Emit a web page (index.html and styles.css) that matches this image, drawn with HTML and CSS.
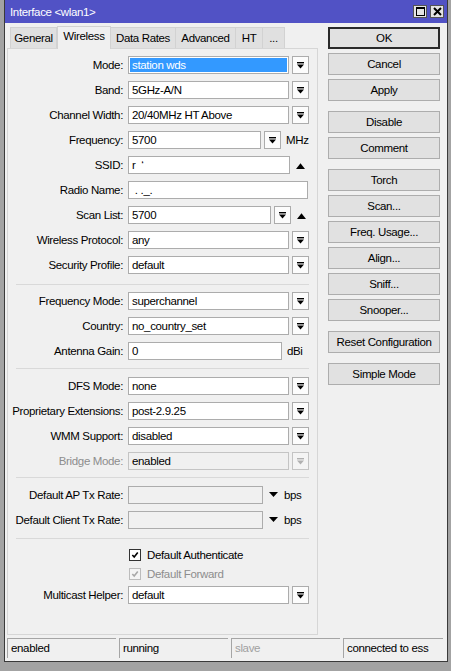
FILE: index.html
```html
<!DOCTYPE html>
<html lang="en">
<head>
    <meta charset="UTF-8">
    <title>Interface &lt;wlan1&gt;</title>
    <link rel="stylesheet" href="styles.css">
</head>
<body>
    <div class="window">
        <div class="titlebar">
            <span class="title">Interface &lt;wlan1&gt;</span>
            <div class="title-btns">
                <span class="tbtn"><svg width="9" height="9" viewBox="0 0 9 9"><rect x="0.5" y="0.5" width="8" height="8" fill="none" stroke="#000"/><rect x="0.5" y="0.5" width="8" height="1.5" fill="#000"/></svg></span>
                <span class="tbtn"><svg width="9" height="9" viewBox="0 0 9 9"><path d="M1 1L8 8M8 1L1 8" stroke="#000" stroke-width="2"/></svg></span>
            </div>
        </div>

        <div class="main">
            <div class="left">
                <div class="tabs">
                    <span class="tab t-general">General</span>
                    <span class="tab active t-wireless">Wireless</span>
                    <span class="tab t-rates">Data Rates</span>
                    <span class="tab t-adv">Advanced</span>
                    <span class="tab t-ht">HT</span>
                    <span class="tab t-more">...</span>
                </div>

                <div class="panel">
                    <div class="section s1">
                        <div class="row">
                            <span class="lbl">Mode:</span>
                            <span class="field w-std selected">station wds</span>
                            <span class="dd"><svg viewBox="0 0 7 7"><rect width="7" height="1.4"/><path d="M0 2.6H7L3.5 6.6Z"/></svg></span>
                        </div>
                        <div class="row">
                            <span class="lbl">Band:</span>
                            <span class="field w-std">5GHz-A/N</span>
                            <span class="dd"><svg viewBox="0 0 7 7"><rect width="7" height="1.4"/><path d="M0 2.6H7L3.5 6.6Z"/></svg></span>
                        </div>
                        <div class="row">
                            <span class="lbl">Channel Width:</span>
                            <span class="field w-std">20/40MHz HT Above</span>
                            <span class="dd"><svg viewBox="0 0 7 7"><rect width="7" height="1.4"/><path d="M0 2.6H7L3.5 6.6Z"/></svg></span>
                        </div>
                        <div class="row">
                            <span class="lbl">Frequency:</span>
                            <span class="field w-freq">5700</span>
                            <span class="dd"><svg viewBox="0 0 7 7"><rect width="7" height="1.4"/><path d="M0 2.6H7L3.5 6.6Z"/></svg></span>
                            <span class="unit">MHz</span>
                        </div>
                        <div class="row">
                            <span class="lbl">SSID:</span>
                            <span class="field w-ssid">r&nbsp;&nbsp;&#8216;</span>
                            <span class="up"><svg viewBox="0 0 8 6"><path d="M0 6H8L4 1Z"/></svg></span>
                        </div>
                        <div class="row">
                            <span class="lbl">Radio Name:</span>
                            <span class="field w-radio">&nbsp;. ._.</span>
                        </div>
                        <div class="row">
                            <span class="lbl">Scan List:</span>
                            <span class="field w-scan">5700</span>
                            <span class="dd"><svg viewBox="0 0 7 7"><rect width="7" height="1.4"/><path d="M0 2.6H7L3.5 6.6Z"/></svg></span>
                            <span class="up"><svg viewBox="0 0 8 6"><path d="M0 6H8L4 1Z"/></svg></span>
                        </div>
                        <div class="row">
                            <span class="lbl">Wireless Protocol:</span>
                            <span class="field w-std">any</span>
                            <span class="dd"><svg viewBox="0 0 7 7"><rect width="7" height="1.4"/><path d="M0 2.6H7L3.5 6.6Z"/></svg></span>
                        </div>
                        <div class="row">
                            <span class="lbl">Security Profile:</span>
                            <span class="field w-std">default</span>
                            <span class="dd"><svg viewBox="0 0 7 7"><rect width="7" height="1.4"/><path d="M0 2.6H7L3.5 6.6Z"/></svg></span>
                        </div>
                    </div>

                    <div class="section s2">
                        <div class="row">
                            <span class="lbl">Frequency Mode:</span>
                            <span class="field w-std">superchannel</span>
                            <span class="dd"><svg viewBox="0 0 7 7"><rect width="7" height="1.4"/><path d="M0 2.6H7L3.5 6.6Z"/></svg></span>
                        </div>
                        <div class="row">
                            <span class="lbl">Country:</span>
                            <span class="field w-std">no_country_set</span>
                            <span class="dd"><svg viewBox="0 0 7 7"><rect width="7" height="1.4"/><path d="M0 2.6H7L3.5 6.6Z"/></svg></span>
                        </div>
                        <div class="row">
                            <span class="lbl">Antenna Gain:</span>
                            <span class="field w-gain">0</span>
                            <span class="unit">dBi</span>
                        </div>
                    </div>

                    <div class="section s3">
                        <div class="row">
                            <span class="lbl">DFS Mode:</span>
                            <span class="field w-std">none</span>
                            <span class="dd"><svg viewBox="0 0 7 7"><rect width="7" height="1.4"/><path d="M0 2.6H7L3.5 6.6Z"/></svg></span>
                        </div>
                        <div class="row">
                            <span class="lbl">Proprietary Extensions:</span>
                            <span class="field w-std">post-2.9.25</span>
                            <span class="dd"><svg viewBox="0 0 7 7"><rect width="7" height="1.4"/><path d="M0 2.6H7L3.5 6.6Z"/></svg></span>
                        </div>
                        <div class="row">
                            <span class="lbl">WMM Support:</span>
                            <span class="field w-std">disabled</span>
                            <span class="dd"><svg viewBox="0 0 7 7"><rect width="7" height="1.4"/><path d="M0 2.6H7L3.5 6.6Z"/></svg></span>
                        </div>
                        <div class="row disabled">
                            <span class="lbl">Bridge Mode:</span>
                            <span class="field w-std">enabled</span>
                            <span class="dd"><svg viewBox="0 0 7 7"><rect width="7" height="1.4"/><path d="M0 2.6H7L3.5 6.6Z"/></svg></span>
                        </div>
                    </div>

                    <div class="section s4">
                        <div class="row">
                            <span class="lbl">Default AP Tx Rate:</span>
                            <span class="field w-rate empty"></span>
                            <span class="down"><svg viewBox="0 0 9 6"><path d="M0 0H9L4.5 5Z"/></svg></span>
                            <span class="unit">bps</span>
                        </div>
                        <div class="row">
                            <span class="lbl">Default Client Tx Rate:</span>
                            <span class="field w-rate empty"></span>
                            <span class="down"><svg viewBox="0 0 9 6"><path d="M0 0H9L4.5 5Z"/></svg></span>
                            <span class="unit">bps</span>
                        </div>
                    </div>

                    <div class="section s5">
                        <div class="row check">
                            <span class="lbl"></span>
                            <span class="box"><svg viewBox="0 0 9 9"><path d="M1.5 4.5L3.6 6.8L7.6 1.8" fill="none" stroke="#000" stroke-width="1.8"/></svg></span>
                            <span class="ctext">Default Authenticate</span>
                        </div>
                        <div class="row check disabled">
                            <span class="lbl"></span>
                            <span class="box"><svg viewBox="0 0 9 9"><path d="M1.5 4.5L3.6 6.8L7.6 1.8" fill="none" stroke="#a8a8a8" stroke-width="1.8"/></svg></span>
                            <span class="ctext">Default Forward</span>
                        </div>
                        <div class="row mcast">
                            <span class="lbl">Multicast Helper:</span>
                            <span class="field w-std">default</span>
                            <span class="dd"><svg viewBox="0 0 7 7"><rect width="7" height="1.4"/><path d="M0 2.6H7L3.5 6.6Z"/></svg></span>
                        </div>
                    </div>
                </div>
            </div>

            <div class="buttons">
                <span class="btn default">OK</span>
                <span class="btn">Cancel</span>
                <span class="btn">Apply</span>
                <span class="btn group">Disable</span>
                <span class="btn">Comment</span>
                <span class="btn group">Torch</span>
                <span class="btn">Scan...</span>
                <span class="btn">Freq. Usage...</span>
                <span class="btn">Align...</span>
                <span class="btn">Sniff...</span>
                <span class="btn">Snooper...</span>
                <span class="btn group">Reset Configuration</span>
                <span class="btn group">Simple Mode</span>
            </div>
        </div>

        <div class="statusbar">
            <span class="cell">enabled</span>
            <span class="cell">running</span>
            <span class="cell muted">slave</span>
            <span class="cell last">connected to ess</span>
        </div>
    </div>
</body>
</html>
```

FILE: styles.css
```css
* {
    margin: 0;
    padding: 0;
    box-sizing: border-box;
}

body {
    background: #a3a3a3;
    font-family: 'Liberation Sans', Arial, sans-serif;
    font-size: 11.5px;
    letter-spacing: -0.35px;
    color: #000;
    padding-left: 4px;
}

.window {
    width: 444px;
    height: 662px;
    background: #f0f0f0;
    border: 1px solid #3a3a3a;
    border-top: none;
    display: flex;
    flex-direction: column;
}

/* title bar */
.titlebar {
    height: 23px;
    background: #5152c5;
    color: #fff;
    display: flex;
    align-items: center;
    justify-content: space-between;
    padding: 0 3px 0 5px;
}

.title {
    font-size: 11.5px;
}

.title-btns {
    display: flex;
    gap: 3px;
}

.tbtn {
    width: 14px;
    height: 13px;
    background: #e4e4e4;
    border: 1px solid #555;
    display: flex;
    align-items: center;
    justify-content: center;
}

/* main area */
.main {
    flex: 1;
    display: flex;
    padding: 2px 0 0 2px;
}

.left {
    width: 311px;
    display: flex;
    flex-direction: column;
    padding-bottom: 3px;
}

.tabs {
    display: flex;
    height: 23px;
    align-items: flex-end;
    padding-left: 3px;
}

.tab {
    height: 21px;
    line-height: 20px;
    text-align: center;
    background: #e0e0e0;
    border: 1px solid #d2d2d2;
    border-bottom: none;
    border-left: none;
}

.tab.t-general { width: 47px; border-left: 1px solid #d2d2d2; }
.tab.t-wireless { width: 54px; }
.tab.t-rates { width: 65px; }
.tab.t-adv { width: 60px; }
.tab.t-ht { width: 27px; }
.tab.t-more { width: 22px; }

.tab.active {
    height: 23px;
    line-height: 19px;
    background: #f0f0f0;
    border: 1px solid #d2d2d2;
    border-bottom: none;
    margin-bottom: -1px;
    position: relative;
    z-index: 1;
}

.panel {
    flex: 1;
    border: 1px solid #d6d6d6;
    background: #f0f0f0;
    display: flex;
    flex-direction: column;
}

.section {
    display: flex;
    flex-direction: column;
    gap: 7px;
    margin: 0 8px;
    border-bottom: 1px solid #d9d9d9;
}

.section .row {
    margin-left: -8px;
}

.s1 { padding-top: 7px; padding-bottom: 10px; }
.s2 { padding-top: 7px; padding-bottom: 8px; }
.s3 { padding-top: 8px; padding-bottom: 7px; }
.s4 { padding-top: 8px; padding-bottom: 9px; }
.s5 { border-bottom: none; gap: 0; padding-top: 6px; }

.row {
    display: flex;
    align-items: center;
    height: 18px;
}

.lbl {
    width: 115px;
    text-align: right;
    margin-right: 5px;
    white-space: nowrap;
}

.field {
    height: 18px;
    line-height: 16px;
    background: #fff;
    border: 1px solid #acacac;
    padding-left: 3px;
    white-space: nowrap;
    overflow: hidden;
}

.field.selected {
    color: #fff;
    background: #3399ff;
    box-shadow: inset 0 0 0 1px #fff;
}

.w-std { width: 161px; }
.w-freq { width: 133px; }
.w-ssid { width: 162px; }
.w-radio { width: 180px; }
.w-scan { width: 143px; }
.w-gain { width: 154px; }
.w-rate { width: 135px; }

.field.empty {
    background: #f0f0f0;
}

.dd {
    width: 17px;
    height: 18px;
    margin-left: 3px;
    background: #fcfcfc;
    border: 1px solid #acacac;
    display: flex;
    align-items: center;
    justify-content: center;
}

.dd svg {
    width: 7px;
    height: 7px;
    fill: #000;
}

.up {
    margin-left: 6px;
    display: flex;
}

.up svg {
    width: 9px;
    height: 7px;
    fill: #000;
}

.down {
    margin-left: 6px;
    display: flex;
}

.down svg {
    width: 9px;
    height: 6px;
    fill: #000;
}

.unit {
    margin-left: 5px;
}

.down + .unit {
    margin-left: 6px;
}

.row.disabled .lbl,
.row.disabled .ctext {
    color: #8d8d8d;
}

.row.disabled .field {
    background: #f0f0f0;
    border-color: #c4c4c4;
}

.row.disabled .dd {
    background: #f4f4f4;
    border-color: #c4c4c4;
}

.row.disabled .dd svg {
    fill: #b0b0b0;
}

.row.check {
    height: 19px;
}

.box {
    width: 12px;
    height: 12px;
    margin-left: 1px;
    border: 1px solid #333;
    background: #fff;
    display: flex;
    align-items: center;
    justify-content: center;
}

.box svg {
    width: 8px;
    height: 8px;
}

.row.check.disabled .box {
    border-color: #bcbcbc;
    background: #f4f4f4;
}

.ctext {
    margin-left: 6px;
}

.row.mcast {
    margin-top: 3px;
}

/* right-hand buttons */
.buttons {
    margin-left: 10px;
    padding-top: 2px;
    display: flex;
    flex-direction: column;
    gap: 4px;
    width: 112px;
}

.btn {
    height: 22px;
    line-height: 20px;
    text-align: center;
    background: #e1e1e1;
    border: 1px solid #adadad;
}

.btn.default {
    border: 2px solid #2a2a2a;
    line-height: 18px;
}

.btn.group {
    margin-top: 6px;
}

/* status bar */
.statusbar {
    height: 20px;
    display: flex;
    gap: 3px;
    padding-left: 2px;
    margin-bottom: 3px;
}

.cell {
    width: 109px;
    border-left: 1px solid #a5a5a5;
    border-top: 1px solid #a5a5a5;
    padding-left: 3px;
    line-height: 19px;
    white-space: nowrap;
}

.cell.muted {
    color: #a0a0a0;
}

.cell.last {
    width: 100px;
}
```
